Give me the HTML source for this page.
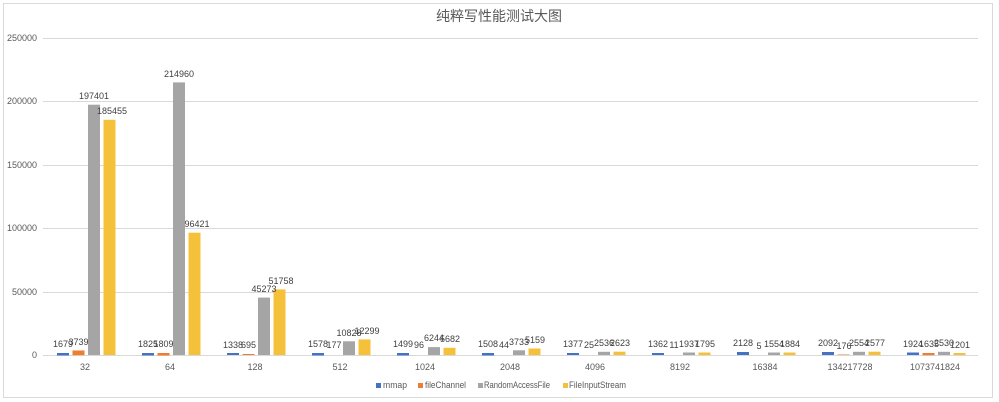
<!DOCTYPE html>
<html><head><meta charset="utf-8"><style>
html,body{margin:0;padding:0;background:#fff;}
svg{display:block;font-family:"Liberation Sans","Noto Sans CJK SC",sans-serif;}
.l{font-size:9px;fill:#404040;text-anchor:middle;}
.a{font-size:9px;fill:#595959;}
.c{font-size:9px;fill:#595959;text-anchor:middle;}
</style></head><body>
<svg width="999" height="402" viewBox="0 0 999 402" xmlns="http://www.w3.org/2000/svg">
<rect x="3.5" y="3.5" width="989" height="394" fill="#fff" stroke="#d9d9d9"/>
<text x="499" y="21" font-size="14" fill="#595959" text-anchor="middle" font-family="Liberation Sans, Noto Sans CJK SC, sans-serif">纯粹写性能测试大图</text>
<g stroke="#d9d9d9" stroke-width="1">
<line x1="43" y1="38.5" x2="978" y2="38.5"/>
<line x1="43" y1="101.5" x2="978" y2="101.5"/>
<line x1="43" y1="165.5" x2="978" y2="165.5"/>
<line x1="43" y1="228.5" x2="978" y2="228.5"/>
<line x1="43" y1="292.5" x2="978" y2="292.5"/>
<line x1="43" y1="355.5" x2="978" y2="355.5"/>
</g>
<g class="a" text-anchor="end">
<text x="37" y="41">250000</text>
<text x="37" y="104">200000</text>
<text x="37" y="168">150000</text>
<text x="37" y="231">100000</text>
<text x="37" y="295">50000</text>
<text x="37" y="358">0</text>
</g>
<g fill="#4472C4">
<rect x="57" y="353" width="12" height="2.5"/>
<rect x="142" y="353" width="12" height="2.5"/>
<rect x="227" y="353" width="12" height="2"/>
<rect x="312" y="353" width="12" height="2.5"/>
<rect x="397" y="353" width="12" height="2.5"/>
<rect x="482" y="353" width="12" height="2.5"/>
<rect x="567" y="353" width="12" height="2"/>
<rect x="652" y="353" width="12" height="2"/>
<rect x="737" y="352" width="12" height="3"/>
<rect x="822" y="352" width="12" height="3"/>
<rect x="907" y="352.5" width="12" height="2.5"/>
</g>
<g fill="#ED7D31">
<rect x="72.5" y="350.5" width="12" height="4.7"/>
<rect x="157.5" y="353" width="12" height="2.5"/>
<rect x="242.5" y="354" width="12" height="1"/>
<rect x="837.5" y="354.5" width="12" height="0.5"/>
<rect x="922.5" y="353" width="12" height="2.2"/>
</g>
<g fill="#A5A5A5">
<rect x="88" y="104.7" width="12" height="250.3"/>
<rect x="173" y="82.4" width="12" height="272.6"/>
<rect x="258" y="297.6" width="12" height="57.4"/>
<rect x="343" y="341.3" width="12" height="13.7"/>
<rect x="428" y="347.1" width="12" height="7.9"/>
<rect x="513" y="350.3" width="12" height="4.7"/>
<rect x="598" y="351.8" width="12" height="3.2"/>
<rect x="683" y="352.5" width="12" height="2.5"/>
<rect x="768" y="352.5" width="12" height="2.5"/>
<rect x="853" y="351.8" width="12" height="3.2"/>
<rect x="938" y="351.8" width="12" height="3.2"/>
</g>
<g fill="#F5C13A">
<rect x="103.5" y="119.8" width="12" height="235.2"/>
<rect x="188.5" y="232.7" width="12" height="122.3"/>
<rect x="273.5" y="289.4" width="12" height="65.6"/>
<rect x="358.5" y="339.4" width="12" height="15.6"/>
<rect x="443.5" y="347.8" width="12" height="7.2"/>
<rect x="528.5" y="348.5" width="12" height="6.5"/>
<rect x="613.5" y="351.7" width="12" height="3.3"/>
<rect x="698.5" y="352.5" width="12" height="2.5"/>
<rect x="783.5" y="352.5" width="12" height="2.5"/>
<rect x="868.5" y="351.7" width="12" height="3.3"/>
<rect x="953.5" y="353" width="12" height="2"/>
</g>
<g class="l">
<text x="63" y="347">1679</text><text x="78.5" y="345">3739</text><text x="94" y="99">197401</text><text x="112" y="114">185455</text>
<text x="148" y="347">1825</text><text x="163.5" y="347">1809</text><text x="179" y="77">214960</text><text x="197" y="227">96421</text>
<text x="233" y="348">1338</text><text x="248.5" y="348">695</text><text x="264" y="292">45273</text><text x="281" y="284">51758</text>
<text x="318" y="347">1578</text><text x="334" y="348">177</text><text x="349" y="336">10828</text><text x="367" y="334">12299</text>
<text x="403" y="347">1499</text><text x="419" y="348">96</text><text x="434" y="341">6244</text><text x="450" y="342">5682</text>
<text x="488" y="347">1508</text><text x="504" y="348">44</text><text x="519" y="345">3733</text><text x="535" y="343">5159</text>
<text x="573" y="347">1377</text><text x="589" y="348">25</text><text x="604" y="346">2536</text><text x="620" y="346">2623</text>
<text x="658" y="347">1362</text><text x="674" y="348">11</text><text x="689" y="347">1937</text><text x="705" y="347">1795</text>
<text x="743" y="346">2128</text><text x="759" y="349">5</text><text x="774" y="347">1554</text><text x="790" y="347">1884</text>
<text x="828" y="346">2092</text><text x="844" y="349">176</text><text x="859" y="346">2554</text><text x="875" y="346">2577</text>
<text x="913" y="347">1924</text><text x="929" y="347">1635</text><text x="944" y="346">2530</text><text x="960" y="348">1201</text>
</g>
<g class="c">
<text x="85" y="370">32</text><text x="170" y="370">64</text><text x="255" y="370">128</text><text x="340" y="370">512</text>
<text x="425" y="370">1024</text><text x="510" y="370">2048</text><text x="595" y="370">4096</text><text x="680" y="370">8192</text>
<text x="765" y="370">16384</text><text x="850" y="370">134217728</text><text x="935" y="370">1073741824</text>
</g>
<rect x="376" y="383" width="5" height="5" fill="#4472C4"/><text class="a" x="383" y="388" textLength="24" lengthAdjust="spacingAndGlyphs">mmap</text>
<rect x="418" y="383" width="5" height="5" fill="#ED7D31"/><text class="a" x="425" y="388" textLength="41" lengthAdjust="spacingAndGlyphs">fileChannel</text>
<rect x="478" y="383" width="5" height="5" fill="#A5A5A5"/><text class="a" x="484" y="388" textLength="66" lengthAdjust="spacingAndGlyphs">RandomAccessFile</text>
<rect x="563" y="383" width="5" height="5" fill="#F5C13A"/><text class="a" x="569" y="388" textLength="57" lengthAdjust="spacingAndGlyphs">FileInputStream</text>
</svg>
</body></html>
